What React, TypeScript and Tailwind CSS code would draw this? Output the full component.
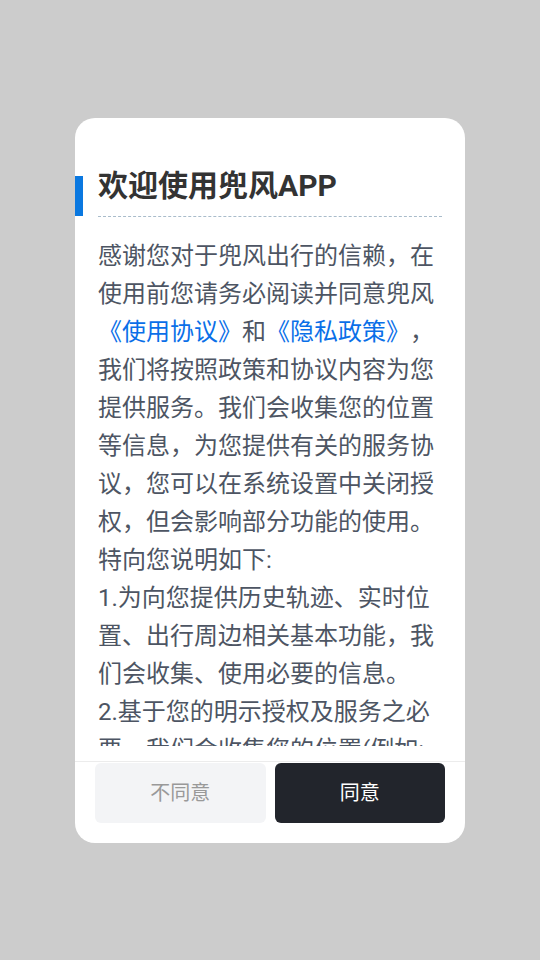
const FONT = 'Roboto, "Noto Sans CJK SC", sans-serif';

export default function App() {
  return (
    <div
      className="min-h-screen w-full bg-[#cccccc] flex items-center justify-center"
      style={{ fontFamily: FONT }}
    >
      <div className="w-[390px] bg-white rounded-[20px] overflow-hidden pt-[48px] pb-[20px] relative">
        {/* Title */}
        <div className="relative mx-[23px] border-b border-dashed border-[#a9bccb] pb-[10px]">
          <span className="absolute -left-[23px] top-[10px] bottom-0 w-[8px] bg-[#0a78e0]" />
          <h1 className="text-[30px] leading-[40px] font-bold text-[#333333]">
            欢迎使用兜风APP
          </h1>
        </div>

        {/* Body */}
        <div className="mx-[23px] mt-[20px] h-[509px] overflow-hidden text-[24px] leading-[38px] text-[#4d5563] [text-spacing-trim:space-all]">
          <p>
            感谢您对于兜风出行的信赖，在使用前您请务必阅读并同意兜风
            <span className="text-[#0a6fe8]">《使用协议》</span>和
            <span className="text-[#0a6fe8]">《隐私政策》</span>
            ，我们将按照政策和协议内容为您提供服务。我们会收集您的位置等信息，为您提供有关的服务协议，您可以在系统设置中关闭授权，但会影响部分功能的使用。
          </p>
          <p>特向您说明如下:</p>
          <p>
            1.为向您提供历史轨迹、实时位置、出行周边相关基本功能，我们会收集、使用必要的信息。
          </p>
          <p>
            2.基于您的明示授权及服务之必要，我们会收集您的位置(例如:行程轨迹、定位信息)，以便为您提供更好的服务。
          </p>
          <p>3.我们会采取业界先进的安全措施保护您的信息安全。</p>
        </div>

        {/* Footer */}
        <div className="mt-[15px] border-t border-[#ececec] pt-[1px] px-[20px] flex gap-[9px]">
          <button className="flex-1 h-[60px] rounded-[6px] bg-[#f3f4f6] text-[#999999] text-[20px]">
            不同意
          </button>
          <button className="flex-1 h-[60px] rounded-[6px] bg-[#22252c] text-white text-[20px]">
            同意
          </button>
        </div>
      </div>
    </div>
  );
}
